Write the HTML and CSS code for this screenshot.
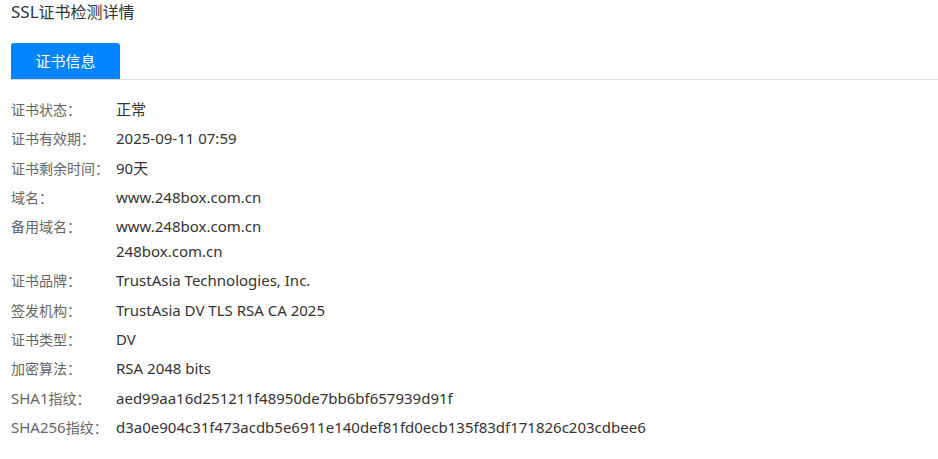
FILE: index.html
```html
<!DOCTYPE html>
<html lang="zh-CN">
<head>
<meta charset="utf-8">
<title>SSL证书检测详情</title>
<link rel="stylesheet" href="styles.css">
</head>
<body>
<div class="page">
  <h1 class="title"><span class="lat">SSL</span>证书检测详情</h1>
  <div class="tabs">
    <div class="tab active">证书信息</div>
  </div>
  <div class="info">
    <div class="row"><div class="label">证书状态：</div><div class="value">正常</div></div>
    <div class="row"><div class="label">证书有效期：</div><div class="value">2025-09-11 07:59</div></div>
    <div class="row"><div class="label">证书剩余时间：</div><div class="value">90天</div></div>
    <div class="row"><div class="label">域名：</div><div class="value">www.248box.com.cn</div></div>
    <div class="row"><div class="label">备用域名：</div><div class="value"><div>www.248box.com.cn</div><div>248box.com.cn</div></div></div>
    <div class="row"><div class="label">证书品牌：</div><div class="value">TrustAsia Technologies, Inc.</div></div>
    <div class="row"><div class="label">签发机构：</div><div class="value">TrustAsia DV TLS RSA CA 2025</div></div>
    <div class="row"><div class="label">证书类型：</div><div class="value">DV</div></div>
    <div class="row"><div class="label">加密算法：</div><div class="value">RSA 2048 bits</div></div>
    <div class="row"><div class="label"><span class="lat">SHA1</span>指纹：</div><div class="value">aed99aa16d251211f48950de7bb6bf657939d91f</div></div>
    <div class="row"><div class="label"><span class="lat">SHA256</span>指纹：</div><div class="value">d3a0e904c31f473acdb5e6911e140def81fd0ecb135f83df171826c203cdbee6</div></div>
  </div>
</div>
</body>
</html>
```
FILE: styles.css
```css
html, body {
  margin: 0;
  padding: 0;
  background: #fff;
}
body {
  font-family: "Noto Sans", "Noto Sans CJK SC", sans-serif;
  font-size: 14px;
  color: #333;
}
.page {
  padding: 0 0 0 11px;
}
.title {
  margin: 0;
  font-size: 16px;
  font-weight: normal;
  line-height: 24px;
  color: #333;
}
.title .lat {
  font-size: 17px;
}
.tabs {
  margin-top: 19px;
  display: flex;
  border-bottom: 1px solid #ddd;
}
.tab {
  width: 109px;
  height: 36px;
  line-height: 36px;
  text-align: center;
  font-size: 15px;
}
.tab.active {
  background: #0084ff;
  color: #fff;
  border-radius: 3px 3px 0 0;
}
.info {
  padding-top: 17px;
}
.row {
  display: flex;
  line-height: 25px;
  margin-bottom: 4.3px;
}
.label {
  width: 105px;
  flex: none;
  color: #666;
  white-space: nowrap;
}
.label .lat {
  font-size: 15px;
}
.value {
  color: #333;
  font-size: 15px;
}
```
